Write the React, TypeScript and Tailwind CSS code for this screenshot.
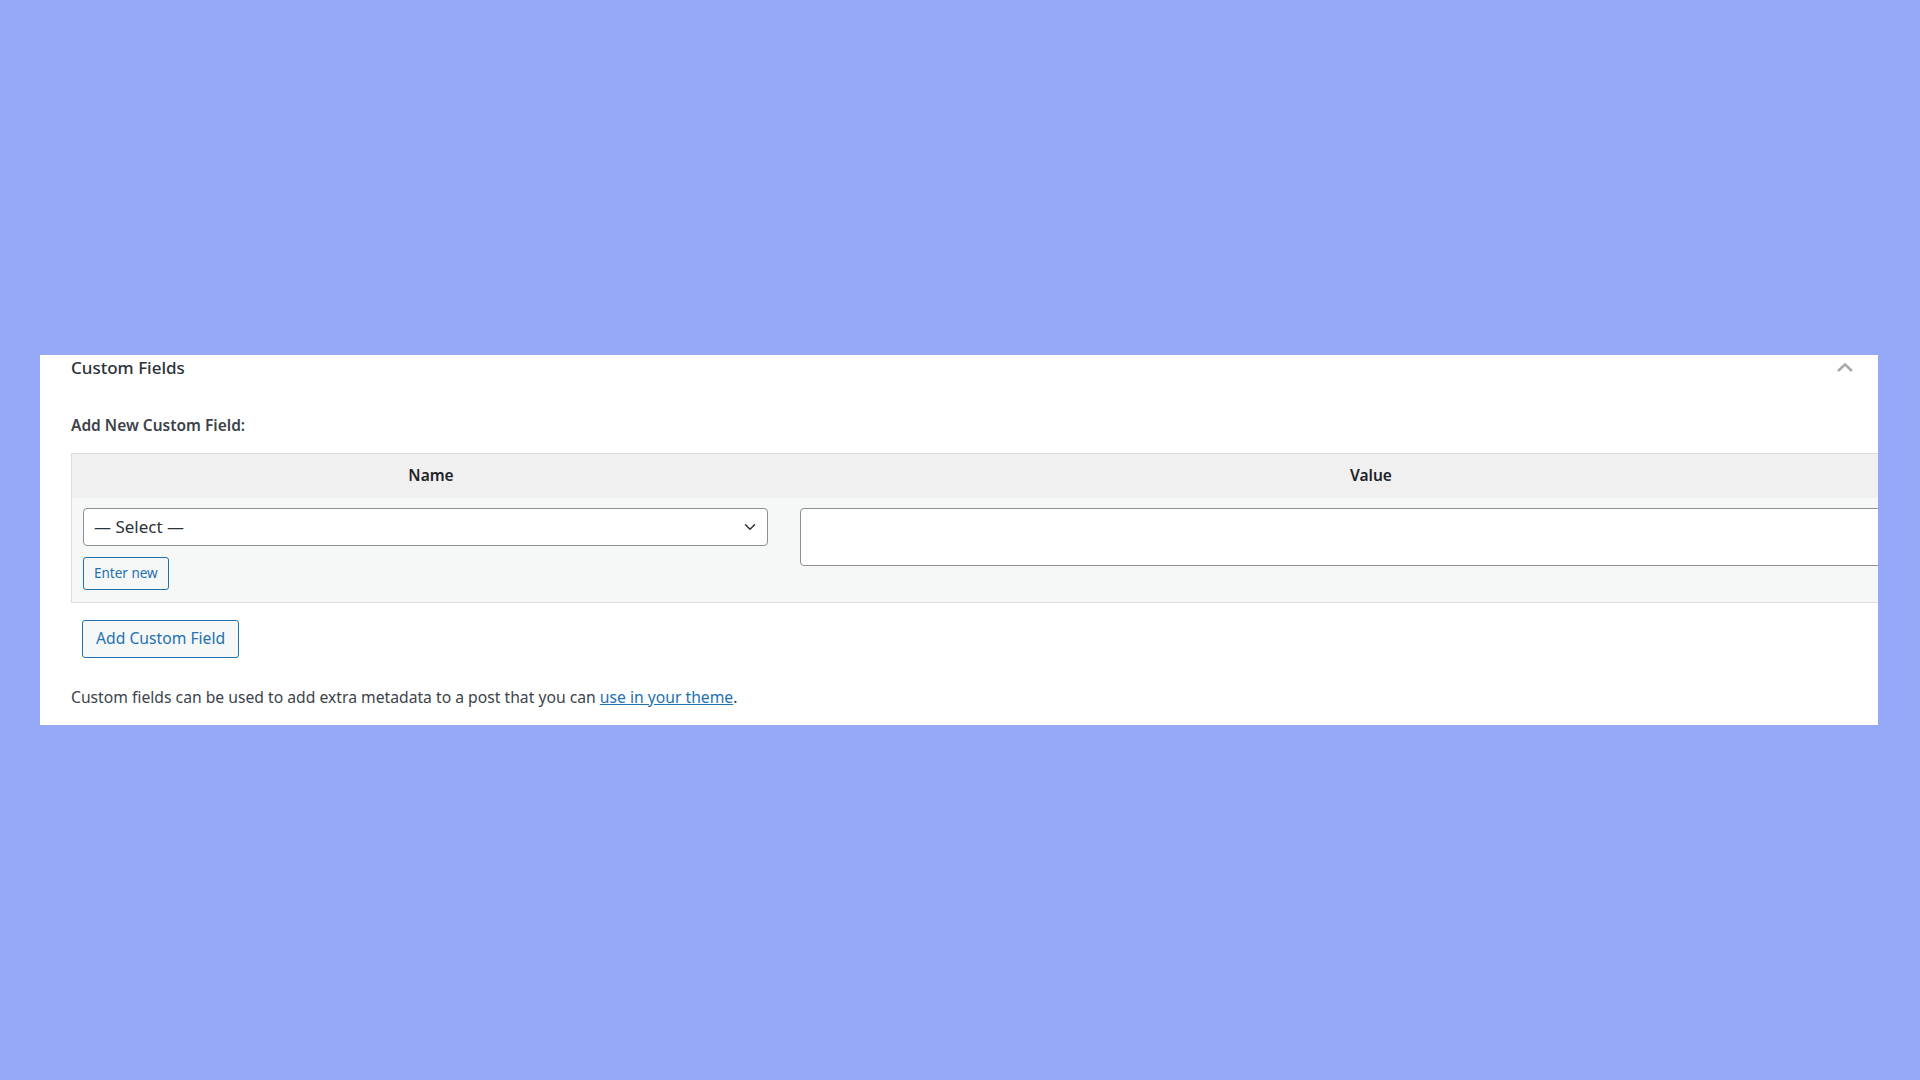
import { ChevronDown } from "lucide-react";

const FONT = { fontFamily: '"Noto Sans", "Open Sans", sans-serif' };

export default function App() {
  return (
    <div className="min-h-screen w-full bg-[#96a8f8] pt-[355px]" style={FONT}>
      <div className="ml-[40px] h-[370px] w-[1838px] overflow-hidden bg-white">
        {/* Header */}
        <div className="flex h-[24px] items-center justify-between pl-[31px] pr-[24px]">
          <h2 className="text-[17px] font-medium leading-none text-[#2c3338]">Custom Fields</h2>
          <svg className="h-[12px] w-[18px] text-[#a7aaad]" viewBox="0 0 18 12" fill="none" stroke="currentColor" strokeWidth={2.6}>
            <polyline points="2,10 9,3.5 16,10" />
          </svg>
        </div>

        <div className="pl-[31px]">
          <p className="mt-[36px] text-[15.5px] font-semibold leading-[20px] text-[#3c434a]">
            Add New Custom Field:
          </p>

          {/* Table */}
          <div className="mt-[18px] w-[1882px] border border-[#dcdcde]">
            <div className="flex h-[44px] items-center bg-[#f0f0f1] text-[15.5px] font-semibold text-[#1d2327]">
              <div className="w-[718px] text-center">Name</div>
              <div className="flex-1 text-center">Value</div>
            </div>
            <div className="flex h-[104px] bg-[#f6f7f7] pt-[10px]">
              <div className="w-[718px] pl-[11px]">
                <div className="flex h-[38px] w-[685px] items-center justify-between rounded-[4px] border border-[#8c8f94] bg-white pl-[10px] pr-[8px] text-[17px] text-[#2c3338]">
                  <span>— Select —</span>
                  <ChevronDown className="h-[18px] w-[18px] text-[#2c3338]" strokeWidth={2} />
                </div>
                <button className="mt-[11px] flex h-[33px] items-center rounded-[3px] border border-[#2271b1] bg-[#f6f7f7] px-[10px] text-[13.5px] text-[#2271b1]">
                  Enter new
                </button>
              </div>
              <div className="flex-1 pl-[10px]">
                <div className="h-[58px] w-full rounded-[4px] border border-[#8c8f94] bg-white" />
              </div>
            </div>
          </div>

          <button className="ml-[11px] mt-[17px] flex h-[38px] items-center rounded-[3px] border border-[#2271b1] bg-[#f6f7f7] px-[13px] text-[15.7px] text-[#2271b1]">
            Add Custom Field
          </button>

          <p className="mt-[28px] text-[15.7px] text-[#3c434a]">
            Custom fields can be used to add extra metadata to a post that you can{" "}
            <a href="#" className="text-[#2271b1] underline">
              use in your theme
            </a>
            .
          </p>
        </div>
      </div>
    </div>
  );
}
